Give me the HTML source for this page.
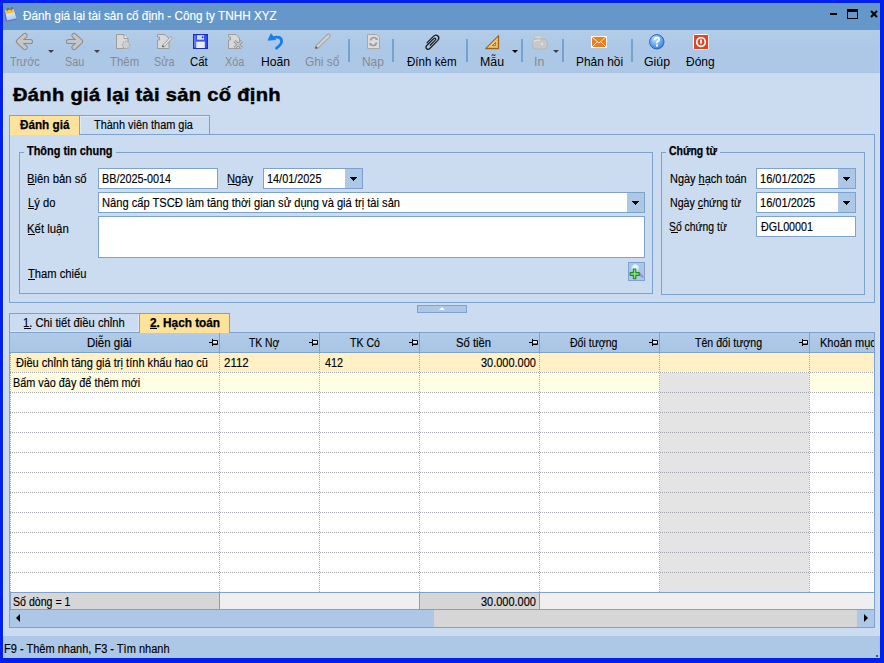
<!DOCTYPE html>
<html><head><meta charset="utf-8">
<style>
*{box-sizing:border-box;margin:0;padding:0}
html,body{width:884px;height:663px;overflow:hidden;background:#0020F0;font-family:"Liberation Sans",sans-serif;color:#000;position:relative}
.a{position:absolute}
.t{position:absolute;white-space:nowrap;font-size:12px;line-height:14px;transform-origin:0 0;-webkit-text-stroke:0.15px currentColor}
.b{font-weight:bold;-webkit-text-stroke:0.25px #000}
.tl{position:absolute;top:55px;font-size:12px;line-height:14px;white-space:nowrap;color:#000;transform-origin:0 0}
.dis{color:#858A92}
.sep{position:absolute;top:39px;width:2px;height:23px;background:#76A1D4}
.dd{position:absolute;top:50px;width:0;height:0;border-left:3px solid transparent;border-right:3px solid transparent;border-top:3px solid #404040}
.inp{position:absolute;background:#fff;border:1px solid #7DA2CE}
.btn{position:absolute;background:#ADC8E6}
.tri{position:absolute;width:0;height:0;border-left:3.5px solid transparent;border-right:3.5px solid transparent;border-top:4px solid #000}
.ul{position:absolute;height:1px;background:#000}
.ln{position:absolute;background:#7DA2CE}
svg{position:absolute;overflow:visible}
.dh{position:absolute;left:10px;width:864px;height:1px;background:repeating-linear-gradient(90deg,#A3A6AD 0 1px,transparent 1px 2px)}
.dv{position:absolute;top:353px;width:1px;height:239px;background:repeating-linear-gradient(180deg,#A3A6AD 0 1px,transparent 1px 2px)}
.hd{text-align:center}
</style></head><body>
<!-- window -->
<div class="a" style="left:3px;top:3px;width:877px;height:655px;background:#CBDCF1"></div>
<div class="a" style="left:3px;top:73px;width:1px;height:563px;background:#DCE8F3"></div>
<div class="a" style="left:879px;top:73px;width:1px;height:563px;background:#DCE8F3"></div>
<!-- title bar -->
<div class="a" style="left:3px;top:3px;width:877px;height:27px;background:#6597C8"></div>
<svg style="left:4px;top:6px" width="14" height="17" viewBox="0 0 14 17"><defs><linearGradient id="cg" x1="0" y1="0" x2="0.3" y2="1"><stop offset="0" stop-color="#FFFFFF"/><stop offset="1" stop-color="#A9CBF0"/></linearGradient></defs>
  <path d="M0.3 5.5 L1.8 15.8 L12.8 13.6 L10.8 4.5 Z" fill="#6F5FD0"/>
  <path d="M1.2 4.6 L9.8 3.4 L12.6 12.6 L3 14.4 Z" fill="url(#cg)"/>
  <path d="M1.2 4.6 L9.8 3.4 L10.6 6.6 L2 8 Z" fill="#F2C43C"/>
  <path d="M3.2 5 C2.5 2 4.5 0.8 5 3.8 M7.2 4.4 C6.5 1.4 8.5 0.2 9 3.2" fill="none" stroke="#5A5A6A" stroke-width="1"/>
</svg>
<div class="t" style="left:23.2px;top:9px;transform:scaleX(0.979);color:#fff">Đánh giá lại tài sản cố định - Công ty TNHH XYZ</div>
<div class="a" style="left:830px;top:13px;width:7px;height:2px;background:#000"></div>
<div class="a" style="left:847px;top:9px;width:11px;height:10px;border:1.5px solid #000;border-top-width:3px"></div>
<svg style="left:869.5px;top:9.5px" width="8" height="8" viewBox="0 0 8 8"><path d="M1 1 L7 7 M7 1 L1 7" stroke="#000" stroke-width="2"/></svg>

<!-- toolbar -->
<div class="a" style="left:3px;top:30px;width:877px;height:43px;background:linear-gradient(#B3CDE8,#ADC8E6 40%,#ADC8E6 96%,#A7C3E3)"></div>
<!-- icons -->
<svg style="left:16px;top:33px" width="17" height="17" viewBox="0 0 17 17"><path d="M9 2.5 L2.5 8.5 L9 14.5 M3 8.5 H14.5" fill="none" stroke="#8C8C8C" stroke-width="5.2" stroke-linecap="round" stroke-linejoin="round"/><path d="M9 2.5 L2.5 8.5 L9 14.5 M3 8.5 H14.5" fill="none" stroke="#C6C6C6" stroke-width="3.2" stroke-linecap="round" stroke-linejoin="round"/></svg>
<div class="dd" style="left:48px"></div>
<svg style="left:66px;top:33px" width="17" height="17" viewBox="0 0 17 17"><path d="M8 2.5 L14.5 8.5 L8 14.5 M14 8.5 H2.5" fill="none" stroke="#8C8C8C" stroke-width="5.2" stroke-linecap="round" stroke-linejoin="round"/><path d="M8 2.5 L14.5 8.5 L8 14.5 M14 8.5 H2.5" fill="none" stroke="#C6C6C6" stroke-width="3.2" stroke-linecap="round" stroke-linejoin="round"/></svg>
<div class="dd" style="left:94px"></div>
<svg style="left:116px;top:34px" width="16" height="16" viewBox="0 0 16 16"><path d="M0.5 0.5 H8 L12 4.5 V14.5 H0.5 Z" fill="#D8D8D8" stroke="#9C9C9C"/><path d="M8 0.5 V4.5 H12" fill="#EEE" stroke="#9C9C9C"/><circle cx="10" cy="11" r="3.6" fill="#CFCFCF" stroke="#B0B0B0" stroke-width="1.4" stroke-dasharray="1.6 1"/></svg>
<svg style="left:157px;top:34px" width="16" height="16" viewBox="0 0 16 16"><path d="M0.5 0.5 H8 L12 4.5 V14.5 H0.5 V6 H2.5 V3 H0.5 Z" fill="#D8D8D8" stroke="#9C9C9C"/><path d="M6.5 12 L14 4" stroke="#9C9C9C" stroke-width="3" stroke-linecap="round"/><path d="M6.5 12 L14 4" stroke="#E6E6E6" stroke-width="1.4" stroke-linecap="round"/><circle cx="6" cy="12.3" r="0.8" fill="#333"/></svg>
<svg style="left:193px;top:34px" width="15" height="15" viewBox="0 0 15 15"><rect x="0.6" y="0.6" width="13.8" height="13.8" fill="#3556EE" stroke="#1B2FC8" stroke-width="1.2"/><rect x="4" y="1.2" width="7" height="4.5" fill="#D8DDE8"/><circle cx="9.6" cy="3.3" r="1" fill="#2040E0"/><rect x="3.2" y="7.6" width="8.6" height="6.4" fill="#ECECEC"/><rect x="1.3" y="1.3" width="1.2" height="12" fill="#7A90FF"/></svg>
<svg style="left:228px;top:34px" width="16" height="16" viewBox="0 0 16 16"><path d="M0.5 0.5 H8 L11.5 4 V14.5 H0.5 V6 H2.5 V3 H0.5 Z" fill="#D8D8D8" stroke="#9C9C9C"/><path d="M6.5 7 L14 14 M14 7 L6.5 14" stroke="#8E8E8E" stroke-width="3"/><path d="M6.5 7 L14 14 M14 7 L6.5 14" stroke="#CFCFCF" stroke-width="1.2"/></svg>
<svg style="left:267px;top:33px" width="17" height="17" viewBox="0 0 17 17"><path d="M6 5.2 C10 3 14.8 4 14.6 8.5 C14.5 11 12.5 13 9.5 15.2" fill="none" stroke="#1B7EE6" stroke-width="2.8" stroke-linecap="round"/><path d="M1 7.3 L4 0.8 L8.6 6.6 Z" fill="#1B7EE6" stroke="#1B7EE6" stroke-width="0.8" stroke-linejoin="round"/></svg>
<svg style="left:314px;top:33px" width="17" height="17" viewBox="0 0 17 17"><path d="M3 14 L14.5 2.8" stroke="#9E9E9E" stroke-width="4.2" stroke-linecap="round"/><path d="M3 14 L14.5 2.8" stroke="#D2D2D2" stroke-width="2.4" stroke-linecap="round"/><path d="M1.5 15.5 L3 13.8" stroke="#555" stroke-width="1.6"/></svg>
<div class="sep" style="left:348px"></div>
<svg style="left:367px;top:34px" width="14" height="15" viewBox="0 0 14 15"><path d="M0.5 0.5 H9.5 L12.5 3.5 V14.5 H0.5 Z" fill="#DCDCDC" stroke="#A8A8A8"/><path d="M3.5 6.5 Q4 3.5 7 3.5 Q9 3.5 9.5 5 M9.5 8.5 Q9 11.5 6 11.5 Q4 11.5 3.5 10" fill="none" stroke="#9A9A9A" stroke-width="1.6"/><path d="M8 5.8 L10.8 6 L10.5 3.5 Z M5 9.2 L2.2 9 L2.5 11.5 Z" fill="#9A9A9A"/></svg>
<div class="sep" style="left:392px"></div>
<svg style="left:423px;top:33px" width="18" height="18" viewBox="0 0 18 18"><g transform="rotate(-45 9 9) translate(-0.6 5.9) scale(1.12 1)"><path d="M5 4.1 H11.8 A1.1 1.1 0 0 0 11.8 1.9 H3 A2.1 2.1 0 0 0 3 6.1 H13 A3 3 0 0 0 13 0.1 H4.5" fill="none" stroke="#1A1A1A" stroke-width="1.25"/></g></svg>
<div class="sep" style="left:466px"></div>
<svg style="left:485px;top:35px" width="15" height="15" viewBox="0 0 15 15"><path d="M13.6 0.6 V13.6 H0.6 Z" fill="#F4C96E" stroke="#9C6418" stroke-width="1.1" stroke-linejoin="round"/><path d="M10.6 7.4 V10.6 H7.4 Z" fill="#D8D8E8" stroke="#9C6418" stroke-width="0.9"/><path d="M3 13.6 v-1.3 M4.5 13.6 v-1 M6 13.6 v-1.3 M7.5 13.6 v-1 M9 13.6 v-1.3 M10.5 13.6 v-1 M12 13.6 v-1.3 M13.6 2.5 h-1.3 M13.6 4 h-1 M13.6 5.5 h-1.3 M13.6 7 h-1 M13.6 8.5 h-1.3 M13.6 10 h-1 M13.6 11.5 h-1.3" stroke="#9C6418" stroke-width="0.6"/></svg>
<div class="dd" style="left:512px;border-top-color:#000"></div>
<div class="sep" style="left:521px"></div>
<svg style="left:532px;top:35px" width="16" height="15" viewBox="0 0 16 15"><path d="M3 4.5 L2.5 1.5 Q2.5 0.5 3.5 0.5 H8.5 Q9.5 0.5 9.8 1.5 L10.5 4.5 Z" fill="#D2D2D2" stroke="#BDBDBD" stroke-width="0.8"/><path d="M0.6 7.5 Q0.6 4 4 4 H11.5 Q15.4 4 15.4 8 V10.5 Q15.4 14 12 14 H4 Q0.6 14 0.6 10.5 Z" fill="#C8C8C8" stroke="#B5B5B5" stroke-width="0.9"/><path d="M1.5 7 Q3 5 8 5" stroke="#E2E2E2" stroke-width="1.2" fill="none"/><rect x="9" y="8" width="2" height="2" fill="#E4E4E4"/></svg>
<div class="dd" style="left:553px"></div>
<div class="sep" style="left:562px"></div>
<svg style="left:591px;top:36px" width="16" height="12" viewBox="0 0 16 12"><rect x="0.5" y="0.5" width="15" height="11" fill="#F27B1E" stroke="#FFF6EA"/><path d="M1 1 L8 7 L15 1 M1 11 L6 6 M15 11 L10 6" fill="none" stroke="#FFEBD6" stroke-width="1"/></svg>
<div class="sep" style="left:631px"></div>
<svg style="left:649px;top:34px" width="16" height="16" viewBox="0 0 16 16"><defs><radialGradient id="qg" cx="0.4" cy="0.3" r="0.8"><stop offset="0" stop-color="#C4E2FF"/><stop offset="0.6" stop-color="#5AA2EC"/><stop offset="1" stop-color="#2F74D0"/></radialGradient></defs><circle cx="7.8" cy="7.8" r="7.2" fill="url(#qg)" stroke="#2A64B8" stroke-width="1"/><path d="M5.6 6 Q5.6 3.6 7.9 3.6 Q10.2 3.6 10.2 5.6 Q10.2 7 8 8 V9.2" fill="none" stroke="#fff" stroke-width="1.8"/><rect x="7" y="10.5" width="2" height="2" fill="#fff"/></svg>
<svg style="left:693px;top:34px" width="16" height="16" viewBox="0 0 16 16"><rect x="0.5" y="0.5" width="15" height="15" rx="1.2" fill="#DF4424" stroke="#FFF4F0"/><circle cx="8" cy="8" r="4.3" fill="none" stroke="#fff" stroke-width="1.7"/><rect x="7.1" y="5.6" width="1.8" height="4" fill="#fff"/></svg>
<div class="a" style="left:3px;top:30px;width:1px;height:43px;background:#B9D1EA"></div>
<div class="a" style="left:879px;top:30px;width:1px;height:43px;background:#B9D1EA"></div>
<!-- labels -->
<div class="tl dis" style="left:10.0px;transform:scaleX(0.906)">Trước</div>
<div class="tl dis" style="left:65.0px;transform:scaleX(0.9)">Sau</div>
<div class="tl dis" style="left:110.0px;transform:scaleX(0.95)">Thêm</div>
<div class="tl dis" style="left:154.0px;transform:scaleX(0.9)">Sửa</div>
<div class="tl" style="left:190.0px;transform:scaleX(0.944)">Cất</div>
<div class="tl dis" style="left:225.0px;transform:scaleX(0.905)">Xóa</div>
<div class="tl" style="left:260.6px;transform:scaleX(1.015)">Hoãn</div>
<div class="tl dis" style="left:305.0px;transform:scaleX(0.991)">Ghi sổ</div>
<div class="tl dis" style="left:361.6px;transform:scaleX(0.995)">Nạp</div>
<div class="tl" style="left:407.4px;transform:scaleX(0.965)">Đính kèm</div>
<div class="tl" style="left:479.7px;transform:scaleX(1.03)">Mẫu</div>
<div class="tl dis" style="left:534.0px;transform:scaleX(1.03)">In</div>
<div class="tl" style="left:575.7px;transform:scaleX(0.993)">Phản hồi</div>
<div class="tl" style="left:644.0px;transform:scaleX(1.025)">Giúp</div>
<div class="tl" style="left:686.0px;transform:scaleX(1.0)">Đóng</div>

<!-- heading -->
<div class="t b" style="left:13px;top:84px;font-size:19px;line-height:22px;letter-spacing:0.28px;-webkit-text-stroke:0.45px #000;transform:scaleX(1.06)">Đánh giá lại tài sản cố định</div>

<!-- top tabs -->
<div class="ln" style="left:9px;top:115px;width:201px;height:1px"></div>
<div class="ln" style="left:9px;top:115px;width:1px;height:188px"></div>
<div class="a" style="left:10px;top:116px;width:69px;height:19px;background:#FDE29B"></div>
<div class="a" style="left:80px;top:116px;width:129px;height:18px;border-left:1px solid #DDE9F5;border-top:1px solid #DDE9F5"></div>
<div class="ln" style="left:79px;top:116px;width:1px;height:19px"></div>
<div class="ln" style="left:209px;top:115px;width:1px;height:20px"></div>
<div class="ln" style="left:79px;top:134px;width:796px;height:1px"></div>
<div class="ln" style="left:874px;top:134px;width:1px;height:169px"></div>
<div class="ln" style="left:9px;top:302px;width:866px;height:1px"></div>
<div class="t b" style="left:20.0px;top:118px;transform:scaleX(0.975)">Đánh giá</div>
<div class="t" style="left:94.4px;top:118px;transform:scaleX(0.91)">Thành viên tham gia</div>

<!-- group 1 -->
<div class="a" style="left:19px;top:152px;width:634px;height:142px;border:1px solid #7DA2CE"></div>
<div class="a" style="left:24px;top:146px;width:92px;height:12px;background:#CBDCF1"></div>
<div class="t b" style="left:27.0px;top:144px;transform:scaleX(0.91)">Thông tin chung</div>
<div class="t" style="left:26.9px;top:172px;transform:scaleX(0.94)">Biên bản số</div><div class="ul" style="left:28px;top:184px;width:7px"></div>
<div class="inp" style="left:98px;top:168px;width:120px;height:21px"></div>
<div class="t" style="left:102.4px;top:172px;transform:scaleX(0.9)">BB/2025-0014</div>
<div class="t" style="left:227.4px;top:172px;transform:scaleX(0.93)">Ngày</div><div class="ul" style="left:228px;top:184px;width:8px"></div>
<div class="inp" style="left:263px;top:168px;width:100px;height:21px"></div>
<div class="btn" style="left:345px;top:169px;width:17px;height:19px"></div><svg style="left:350px;top:177px" width="7" height="4" shape-rendering="crispEdges"><rect x="0" y="0" width="7" height="1"/><rect x="1" y="1" width="5" height="1"/><rect x="2" y="2" width="3" height="1"/><rect x="3" y="3" width="1" height="1"/></svg>
<div class="t" style="left:266.7px;top:172px;transform:scaleX(0.907)">14/01/2025</div>
<div class="t" style="left:27.7px;top:196px;transform:scaleX(0.932)">Lý do</div><div class="ul" style="left:28px;top:208px;width:6px"></div>
<div class="inp" style="left:98px;top:192px;width:547px;height:21px"></div>
<div class="btn" style="left:627px;top:193px;width:17px;height:19px"></div><svg style="left:632px;top:201px" width="7" height="4" shape-rendering="crispEdges"><rect x="0" y="0" width="7" height="1"/><rect x="1" y="1" width="5" height="1"/><rect x="2" y="2" width="3" height="1"/><rect x="3" y="3" width="1" height="1"/></svg>
<div class="t" style="left:102.4px;top:196px;transform:scaleX(0.928)">Nâng cấp TSCĐ làm tăng thời gian sử dụng và giá trị tài sản</div>
<div class="t" style="left:26.8px;top:222px;transform:scaleX(0.948)">Kết luận</div><div class="ul" style="left:28px;top:234px;width:7px"></div>
<div class="inp" style="left:98px;top:216px;width:547px;height:42px"></div>
<div class="t" style="left:27.8px;top:267px;transform:scaleX(0.931)">Tham chiếu</div><div class="ul" style="left:28px;top:279px;width:7px"></div>
<div class="a" style="left:628px;top:262px;width:17px;height:19px;background:#ADC8E6;border:1px solid #7DA2CE"></div>
<svg style="left:629px;top:263px" width="16" height="17" viewBox="0 0 16 17"><defs><radialGradient id="lg" cx="0.5" cy="0.35" r="0.6"><stop offset="0" stop-color="#FFFFFF"/><stop offset="1" stop-color="#A8D0F4"/></radialGradient></defs><circle cx="6.3" cy="5.3" r="4.6" fill="url(#lg)" stroke="#8EC0EC" stroke-width="0.9"/><path d="M10 10 L13.5 13.8" stroke="#9C88E0" stroke-width="2.2" stroke-linecap="round"/><path transform="translate(0.6 0.8)" d="M3.8 5.2 H6.2 V8.8 H9.6 V11.6 H6.2 V15 H3.8 V11.6 H0.6 V8.8 H3.8 Z" fill="#8EE07A" stroke="#1F8A1F" stroke-width="1.1" stroke-linejoin="round"/></svg>

<!-- group 2 -->
<div class="a" style="left:661px;top:152px;width:204px;height:143px;border:1px solid #7DA2CE"></div>
<div class="a" style="left:666px;top:146px;width:54px;height:12px;background:#CBDCF1"></div>
<div class="t b" style="left:668.6px;top:144px;transform:scaleX(0.868)">Chứng từ</div>
<div class="t" style="left:669.7px;top:172px;transform:scaleX(0.912)">Ngày <span style="text-decoration:underline">h</span>ạch toán</div>
<div class="inp" style="left:756px;top:168px;width:100px;height:21px"></div>
<div class="btn" style="left:838px;top:169px;width:17px;height:19px"></div><svg style="left:843px;top:177px" width="7" height="4" shape-rendering="crispEdges"><rect x="0" y="0" width="7" height="1"/><rect x="1" y="1" width="5" height="1"/><rect x="2" y="2" width="3" height="1"/><rect x="3" y="3" width="1" height="1"/></svg>
<div class="t" style="left:759.5px;top:172px;transform:scaleX(0.92)">16/01/2025</div>
<div class="t" style="left:669.7px;top:196px;transform:scaleX(0.887)">Ngày <span style="text-decoration:underline">c</span>hứng từ</div>
<div class="inp" style="left:756px;top:192px;width:100px;height:21px"></div>
<div class="btn" style="left:838px;top:193px;width:17px;height:19px"></div><svg style="left:843px;top:201px" width="7" height="4" shape-rendering="crispEdges"><rect x="0" y="0" width="7" height="1"/><rect x="1" y="1" width="5" height="1"/><rect x="2" y="2" width="3" height="1"/><rect x="3" y="3" width="1" height="1"/></svg>
<div class="t" style="left:759.5px;top:196px;transform:scaleX(0.92)">16/01/2025</div>
<div class="t" style="left:669.0px;top:220px;transform:scaleX(0.867)">Số chứng từ</div><div class="ul" style="left:671px;top:232px;width:7px"></div>
<div class="inp" style="left:756px;top:216px;width:100px;height:21px"></div>
<div class="t" style="left:761.2px;top:220px;transform:scaleX(0.897)">ĐGL00001</div>

<!-- splitter -->
<div class="a" style="left:417px;top:305px;width:50px;height:8px;background:#ADC8E6;border:1px solid #7DA2CE"></div>
<div class="a" style="left:439px;top:307px;width:0;height:0;border-left:3px solid transparent;border-right:3px solid transparent;border-bottom:3px solid #fff"></div>

<!-- bottom tabs -->
<div class="ln" style="left:9px;top:313px;width:221px;height:1px"></div>
<div class="ln" style="left:9px;top:313px;width:1px;height:20px"></div>
<div class="a" style="left:10px;top:314px;width:129px;height:18px;border-right:1px solid #DDE9F5;border-bottom:1px solid #DDE9F5"></div>
<div class="ln" style="left:139px;top:313px;width:1px;height:20px"></div>
<div class="ln" style="left:229px;top:313px;width:1px;height:20px"></div>

<!-- grid -->
<div id="grid" class="a" style="left:9px;top:332px;width:866px;height:296px;background:#fff;border:1px solid #7DA2CE"></div>
<div class="a" style="left:140px;top:314px;width:89px;height:19px;background:#FDE29B"></div>
<div class="ln" style="left:229px;top:313px;width:1px;height:20px"></div>
<div class="t" style="left:23.4px;top:316px;transform:scaleX(0.936)">1. Chi tiết điều chỉnh</div><div class="ul" style="left:24px;top:328px;width:7px"></div>
<div class="t b" style="left:150.0px;top:316px;transform:scaleX(0.982)">2. Hạch toán</div><div class="ul" style="left:150px;top:328px;width:7px"></div>
<div class="a" style="left:10px;top:333px;width:864px;height:19px;background:linear-gradient(#B1CBE8,#ADC8E6 50%,#A9C5E4)"></div>
<div class="ln" style="left:10px;top:352px;width:864px;height:1px"></div>
<div class="ln" style="left:219px;top:333px;width:1px;height:19px"></div>
<div class="ln" style="left:319px;top:333px;width:1px;height:19px"></div>
<div class="ln" style="left:419px;top:333px;width:1px;height:19px"></div>
<div class="ln" style="left:539px;top:333px;width:1px;height:19px"></div>
<div class="ln" style="left:659px;top:333px;width:1px;height:19px"></div>
<div class="ln" style="left:809px;top:333px;width:1px;height:19px"></div>
<div class="a" style="left:10px;top:353px;width:864px;height:19px;background:#FFF0C6"></div>
<div class="a" style="left:10px;top:373px;width:864px;height:19px;background:#FFFDE2"></div>
<div class="a" style="left:660px;top:373px;width:149px;height:219px;background:#E4E4E4"></div>
<div class="dh" style="top:372px"></div>
<div class="dh" style="top:392px"></div>
<div class="dh" style="top:412px"></div>
<div class="dh" style="top:432px"></div>
<div class="dh" style="top:452px"></div>
<div class="dh" style="top:472px"></div>
<div class="dh" style="top:492px"></div>
<div class="dh" style="top:512px"></div>
<div class="dh" style="top:532px"></div>
<div class="dh" style="top:552px"></div>
<div class="dh" style="top:572px"></div>
<div class="dv" style="left:10px"></div>
<div class="dv" style="left:219px"></div>
<div class="dv" style="left:319px"></div>
<div class="dv" style="left:419px"></div>
<div class="dv" style="left:539px"></div>
<div class="dv" style="left:659px"></div>
<div class="dv" style="left:809px"></div>
<div class="t" style="left:86.7px;top:336px;transform:scaleX(0.956)">Diễn giải</div>
<svg style="left:209px;top:339px" width="10" height="8" viewBox="0 0 10 8"><path d="M0 3.5 H3" stroke="#000"/><path d="M3.5 0 V7" stroke="#000"/><path d="M4 1.5 H8.5 V5.5 H4" fill="#E0EEFF" stroke="#000"/><path d="M4 5 H8" stroke="#000"/></svg>
<div class="t" style="left:249.4px;top:336px;transform:scaleX(0.863)">TK Nợ</div>
<svg style="left:309px;top:339px" width="10" height="8" viewBox="0 0 10 8"><path d="M0 3.5 H3" stroke="#000"/><path d="M3.5 0 V7" stroke="#000"/><path d="M4 1.5 H8.5 V5.5 H4" fill="#E0EEFF" stroke="#000"/><path d="M4 5 H8" stroke="#000"/></svg>
<div class="t" style="left:349.5px;top:336px;transform:scaleX(0.879)">TK Có</div>
<svg style="left:409px;top:339px" width="10" height="8" viewBox="0 0 10 8"><path d="M0 3.5 H3" stroke="#000"/><path d="M3.5 0 V7" stroke="#000"/><path d="M4 1.5 H8.5 V5.5 H4" fill="#E0EEFF" stroke="#000"/><path d="M4 5 H8" stroke="#000"/></svg>
<div class="t" style="left:456.0px;top:336px;transform:scaleX(0.939)">Số tiền</div>
<svg style="left:529px;top:339px" width="10" height="8" viewBox="0 0 10 8"><path d="M0 3.5 H3" stroke="#000"/><path d="M3.5 0 V7" stroke="#000"/><path d="M4 1.5 H8.5 V5.5 H4" fill="#E0EEFF" stroke="#000"/><path d="M4 5 H8" stroke="#000"/></svg>
<div class="t" style="left:570.1px;top:336px;transform:scaleX(0.879)">Đối tượng</div>
<svg style="left:649px;top:339px" width="10" height="8" viewBox="0 0 10 8"><path d="M0 3.5 H3" stroke="#000"/><path d="M3.5 0 V7" stroke="#000"/><path d="M4 1.5 H8.5 V5.5 H4" fill="#E0EEFF" stroke="#000"/><path d="M4 5 H8" stroke="#000"/></svg>
<div class="t" style="left:695.2px;top:336px;transform:scaleX(0.883)">Tên đối tượng</div>
<svg style="left:799px;top:339px" width="10" height="8" viewBox="0 0 10 8"><path d="M0 3.5 H3" stroke="#000"/><path d="M3.5 0 V7" stroke="#000"/><path d="M4 1.5 H8.5 V5.5 H4" fill="#E0EEFF" stroke="#000"/><path d="M4 5 H8" stroke="#000"/></svg>
<div class="a" style="left:810px;top:333px;width:64px;height:19px;overflow:hidden"><div class="t" style="left:9.8px;top:3px;transform:scaleX(0.92)">Khoản mục</div></div>
<div class="t" style="left:16.2px;top:356px;transform:scaleX(0.922)">Điều chỉnh tăng giá trị tính khấu hao cũ</div>
<div class="t" style="left:224.0px;top:356px;transform:scaleX(0.96)">2112</div>
<div class="t" style="left:324.9px;top:356px;transform:scaleX(0.905)">412</div>
<div class="t" style="left:481.2px;top:356px;transform:scaleX(0.914)">30.000.000</div>
<div class="t" style="left:12.7px;top:376px;transform:scaleX(0.904)">Bấm vào đây để thêm mới</div>
<div class="ln" style="left:9px;top:592px;width:866px;height:1px"></div>
<div class="ln" style="left:10px;top:592px;width:1px;height:17px"></div>
<div class="a" style="left:11px;top:593px;width:208px;height:16px;background:#D6D6D6"></div>
<div class="a" style="left:220px;top:593px;width:199px;height:16px;background:#EFEFEF"></div>
<div class="a" style="left:420px;top:593px;width:119px;height:16px;background:#D6D6D6"></div>
<div class="a" style="left:540px;top:593px;width:334px;height:16px;background:#EFEFEF"></div>
<div class="ln" style="left:219px;top:593px;width:1px;height:16px"></div>
<div class="ln" style="left:419px;top:593px;width:1px;height:16px"></div>
<div class="ln" style="left:539px;top:593px;width:1px;height:16px"></div>
<div class="ln" style="left:9px;top:609px;width:866px;height:1px"></div>
<div class="t" style="left:13.0px;top:595px;transform:scaleX(0.884)">Số dòng = 1</div>
<div class="t" style="left:481.2px;top:595px;transform:scaleX(0.914)">30.000.000</div>
<div class="a" style="left:10px;top:610px;width:864px;height:17px;background:#ADC8E6"></div>
<div class="a" style="left:434px;top:610px;width:423px;height:17px;background:#D6D6D6"></div>
<div class="a" style="left:16px;top:614px;width:0;height:0;border-top:4px solid transparent;border-bottom:4px solid transparent;border-right:4px solid #000"></div>
<div class="a" style="left:864px;top:614px;width:0;height:0;border-top:4px solid transparent;border-bottom:4px solid transparent;border-left:4px solid #000"></div>
<div class="ln" style="left:9px;top:627px;width:866px;height:1px"></div>
<div class="a" style="left:3px;top:636px;width:877px;height:22px;background:#ADC8E6"></div>
<div class="t" style="left:4.1px;top:642px;transform:scaleX(0.918)">F9 - Thêm nhanh, F3 - Tìm nhanh</div>
<div class="a" style="left:876px;top:655px;width:2px;height:2px;background:#44546E"></div>
</body></html>
